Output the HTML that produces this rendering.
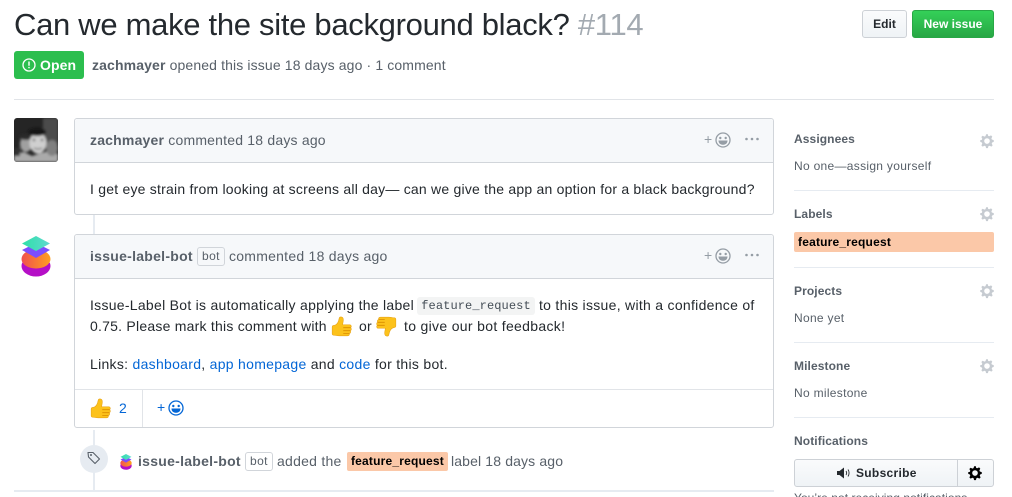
<!DOCTYPE html>
<html><head><meta charset="utf-8"><style>
html,body{margin:0;padding:0;background:#fff;width:1012px;height:497px;overflow:hidden;font-family:"Liberation Sans",sans-serif;color:#24292e}
#w{position:relative;width:1012px;height:497px;overflow:hidden}
.a{position:absolute}
.t{position:absolute;white-space:nowrap;line-height:20px;font-size:14px;letter-spacing:.2px}
.g{color:#586069}.b{font-weight:bold}
.hr{position:absolute;left:794px;width:200px;height:1px;background:#e6ebf1}
.sh{position:absolute;left:794px;font-size:12px;font-weight:bold;color:#586069;line-height:16px;letter-spacing:.1px;white-space:nowrap}
.sv{position:absolute;left:794px;font-size:12px;color:#586069;line-height:16px;letter-spacing:.3px;white-space:nowrap}
.box{position:absolute;left:74px;width:698px;border:1px solid #d1d5da;border-radius:3px;background:#fff}
.head{position:absolute;left:0;top:0;width:698px;height:43px;background:#f6f8fa;border-bottom:1px solid #d1d5da;border-radius:3px 3px 0 0}
.bot{position:absolute;border:1px solid #d1d5da;border-radius:3px;font-size:12px;line-height:17px;height:17px;padding:0 4px;color:#586069;letter-spacing:.4px}
a{color:#0366d6;text-decoration:none}
.lab{background:#fbc8a8;color:#000;font-weight:bold;font-size:12px}
svg{position:absolute;overflow:visible}
</style></head><body><div id="w">
<svg width="0" height="0"><defs>
<g id="gear"><path fill="#c6cbd1" fill-rule="evenodd" d="M14 8.800V7.200l-1.700-.5-.4-1 .8-1.600-1.100-1.100-1.600.8-1-.4L8.800 2H7.200l-.5 1.700-1 .4-1.600-.8-1.100 1.100.8 1.600-.4 1L2 7.200v1.600l1.400.5.4 1-.8 1.600 1.100 1.100 1.600-.8 1 .4.5 1.700h1.600l.5-1.700 1-.4 1.600.8 1.100-1.100-.8-1.600.4-1zM8 10.500A2.500 2.500 0 1 1 8 5.500a2.500 2.500 0 0 1 0 5z"/></g>
<g id="smile"><circle cx="8" cy="8" r="7" fill="none" stroke="currentColor" stroke-width="1.300"/><circle cx="5.300" cy="6" r="1.200" fill="currentColor"/><circle cx="10.700" cy="6" r="1.200" fill="currentColor"/><path d="M3.500 8.500h9c0 2.800-2 4.300-4.500 4.300S3.500 11.300 3.500 8.500z" fill="currentColor"/></g>
<g id="up"><path fill="#fcc21b" stroke="#e8a317" stroke-width=".5" d="M1 9.500C1 8.500 2 8 3 8 5 7.500 6.500 5 7 2 7.300.3 10 .3 10.500 2.500 10.800 4.500 10 6 10 7.500H16C17.500 7.500 17.800 9.500 16.800 10 17.800 10.800 17.600 12.300 16.500 12.600 17.200 13.400 16.800 14.800 15.800 15 16 16.300 15.200 17 14 17H7C5 17 4 16.500 2.500 16.500 1.500 16.500 1 16 1 15z"/><path stroke="#d98c00" stroke-width=".7" fill="none" d="M10.500 10H16.800M10.500 12.600H16.500M10.500 15H15.800"/></g>
<linearGradient id="tl" x1="0" y1="0" x2="1" y2="0"><stop offset="0" stop-color="#2fe0a8"/><stop offset="1" stop-color="#5fd9d0"/></linearGradient>
<linearGradient id="or" x1="0" y1="0" x2="1" y2="0"><stop offset="0" stop-color="#f0504f"/><stop offset="1" stop-color="#ffa01e"/></linearGradient>
<g id="stack"><ellipse cx="15" cy="30" rx="14.500" ry="10.500" fill="#b50fc6"/><ellipse cx="15" cy="23" rx="14.500" ry="9.500" fill="url(#or)"/><path d="M15 7 29 14 15 22 1 14z" fill="#7c4dff"/><path d="M15 0 29 7.500 15 15 1 7.500z" fill="url(#tl)"/></g>
</defs></svg>

<div class="t" style="left:14px;top:5px;font-size:31px;line-height:40px;letter-spacing:-.3px">Can we make the site background black? <span style="color:#a3aab1">#114</span></div>

<div class="a" style="left:862px;top:10px;width:43px;height:26px;border:1px solid #cdd1d6;border-radius:3px;background:linear-gradient(#fafbfc,#eff3f6);font-size:12px;font-weight:bold;line-height:26px;text-align:center">Edit</div>
<div class="a" style="left:912px;top:10px;width:80px;height:26px;border:1px solid #28a745;border-radius:3px;background:linear-gradient(#34d058,#28a745);font-size:12px;font-weight:bold;line-height:26px;text-align:center;color:#fff">New issue</div>

<div class="a" style="left:14px;top:51px;width:70px;height:28px;background:#2cbe4e;border-radius:3px"></div>
<svg style="left:22px;top:58px" width="14" height="14" viewBox="0 0 14 14"><circle cx="7" cy="7" r="6" fill="none" stroke="#fff" stroke-width="1.300"/><path d="M6.300 3.500h1.400v4.300H6.300zM6.300 8.900h1.400v1.400H6.300z" fill="#fff"/></svg>
<div class="t b" style="left:40px;top:55px;color:#fff;letter-spacing:.1px">Open</div>
<div class="t g" style="left:92px;top:55px;letter-spacing:.13px"><b>zachmayer</b> opened this issue 18 days ago · 1 comment</div>
<div class="a" style="left:14px;top:99px;width:980px;height:1px;background:#e1e4e8"></div>

<!-- avatar -->
<svg style="left:14px;top:118px" width="44" height="44" viewBox="0 0 44 44"><defs><clipPath id="c"><rect width="44" height="44" rx="3"/></clipPath><filter id="bl"><feGaussianBlur stdDeviation="1.200"/></filter></defs><g clip-path="url(#c)"><rect width="44" height="44" fill="#252525"/><g filter="url(#bl)"><rect x="29" width="15" height="26" fill="#4c4c4c"/><ellipse cx="12" cy="26" rx="6" ry="8" fill="#a0a0a0"/><ellipse cx="12" cy="19" rx="7" ry="3" fill="#2a2a2a"/><path d="M0 44V36L10 34 18 38 24 36 34 33 44 36V44z" fill="#aaa"/><ellipse cx="38" cy="30" rx="6" ry="8" fill="#808080"/><ellipse cx="24" cy="25" rx="8.500" ry="10.500" fill="#cfcfcf"/><ellipse cx="23" cy="14" rx="9" ry="4" fill="#141414"/><circle cx="20" cy="22" r="1.200" fill="#444"/><circle cx="28" cy="22" r="1.200" fill="#444"/><path d="M20 30c2 1.500 6 1.500 8 0" stroke="#666" stroke-width="1.200" fill="none"/><rect y="30" width="6" height="8" fill="#333"/></g></g></svg>

<!-- comment 1 -->
<div class="box" style="top:118px;height:95px"><div class="head"></div></div>
<div class="t g" style="left:90px;top:130px"><b>zachmayer</b> commented 18 days ago</div>
<div class="t" style="left:90px;top:179px;letter-spacing:.22px">I get eye strain from looking at screens all day— can we give the app an option for a black background?</div>
<div class="t" style="left:704px;top:129px;color:#959da5">+</div>
<svg style="left:715px;top:132px;color:#959da5" width="16" height="16" viewBox="0 0 16 16"><use href="#smile"/></svg>
<svg style="left:745px;top:137px" width="15" height="4"><circle cx="1.500" cy="2" r="1.300" fill="#959da5"/><circle cx="7" cy="2" r="1.300" fill="#959da5"/><circle cx="12.500" cy="2" r="1.300" fill="#959da5"/></svg>
<div class="a" style="left:93px;top:215px;width:2px;height:19px;background:#e6ebf1"></div>

<!-- bot avatar -->
<svg style="left:21px;top:236px" width="30" height="41" viewBox="0 0 30 41"><use href="#stack"/></svg>

<!-- comment 2 -->
<div class="box" style="top:234px;height:192px"><div class="head"></div>
<div class="a" style="left:0;top:154px;width:698px;height:1px;background:#e1e4e8"></div>
<div class="a" style="left:67px;top:155px;width:1px;height:37px;background:#e1e4e8"></div></div>
<div class="t g" style="left:90px;top:246px;letter-spacing:.27px"><b>issue-label-bot</b></div>
<div class="bot" style="left:197px;top:247px">bot</div>
<div class="t g" style="left:229px;top:246px;letter-spacing:.25px">commented 18 days ago</div>
<div class="t" style="left:704px;top:245px;color:#959da5">+</div>
<svg style="left:715px;top:248px;color:#959da5" width="16" height="16" viewBox="0 0 16 16"><use href="#smile"/></svg>
<svg style="left:745px;top:253px" width="15" height="4"><circle cx="1.500" cy="2" r="1.300" fill="#959da5"/><circle cx="7" cy="2" r="1.300" fill="#959da5"/><circle cx="12.500" cy="2" r="1.300" fill="#959da5"/></svg>

<div class="t" style="left:90px;top:295px;letter-spacing:.28px">Issue-Label Bot is automatically applying the label</div>
<div class="a" style="left:417px;top:297px;width:118px;height:18px;background:#f3f4f4;border-radius:3px;font:12px/19px 'Liberation Mono',monospace;text-align:center;color:#444d56;letter-spacing:.1px">feature_request</div>
<div class="t" style="left:539px;top:295px;letter-spacing:.29px">to this issue, with a confidence of</div>
<div class="t" style="left:90px;top:316px;letter-spacing:.23px">0.75. Please mark this comment with</div>
<svg style="left:331px;top:316px" width="21" height="21" viewBox="0 0 18 18"><use href="#up"/></svg>
<div class="t" style="left:359px;top:316px">or</div>
<svg style="left:376px;top:316px" width="21" height="21" viewBox="0 0 18 18"><g transform="translate(18,18) rotate(180)"><use href="#up"/></g></svg>
<div class="t" style="left:404px;top:316px;letter-spacing:.32px">to give our bot feedback!</div>
<div class="t" style="left:90px;top:354px;letter-spacing:.29px">Links: <a>dashboard</a>, <a>app homepage</a> and <a>code</a> for this bot.</div>

<svg style="left:90px;top:398px" width="21" height="21" viewBox="0 0 18 18"><use href="#up"/></svg>
<div class="t" style="left:119px;top:398px;color:#0366d6;font-size:14px">2</div>
<div class="t" style="left:157px;top:397px;color:#0366d6">+</div>
<svg style="left:168px;top:400px;color:#0366d6" width="16" height="16" viewBox="0 0 16 16"><use href="#smile"/></svg>

<!-- timeline -->
<div class="a" style="left:93px;top:430px;width:2px;height:60px;background:#e6ebf1"></div>
<div class="a" style="left:80px;top:445px;width:28px;height:28px;border-radius:50%;background:#e6ebf1"></div>
<svg style="left:87px;top:451px" width="14" height="14" viewBox="0 0 14 14"><path d="M1 1.500h5l6.500 6.500-4.500 4.500L1.500 6z" fill="none" stroke="#586069" stroke-width="1.100" stroke-linejoin="round"/><circle cx="4" cy="4" r="1" fill="#586069"/></svg>
<svg style="left:120px;top:454px" width="12" height="16" viewBox="0 0 30 41"><use href="#stack"/></svg>
<div class="t g" style="left:138px;top:451px;letter-spacing:.27px"><b>issue-label-bot</b></div>
<div class="bot" style="left:245px;top:452px">bot</div>
<div class="t g" style="left:277px;top:451px;letter-spacing:.25px">added the</div>
<div class="a lab" style="left:347px;top:452px;width:101px;height:19px;line-height:19px;text-align:center;border-radius:2px;letter-spacing:.2px">feature_request</div>
<div class="t g" style="left:451px;top:451px;letter-spacing:.14px">label 18 days ago</div>
<div class="a" style="left:14px;top:490px;width:760px;height:2px;background:#e6ebf1"></div>

<!-- sidebar -->
<div class="sh" style="top:131px">Assignees</div>
<svg style="left:978px;top:132px" width="18" height="18" viewBox="0 0 16 16"><use href="#gear"/></svg>
<div class="sv" style="top:158px">No one—assign yourself</div>
<div class="hr" style="top:190px"></div>
<div class="sh" style="top:206px">Labels</div>
<svg style="left:978px;top:205px" width="18" height="18" viewBox="0 0 16 16"><use href="#gear"/></svg>
<div class="a lab" style="left:794px;top:232px;width:196px;height:20px;line-height:20px;padding-left:4px;border-radius:2px;letter-spacing:.2px">feature_request</div>
<div class="hr" style="top:267px"></div>
<div class="sh" style="top:283px">Projects</div>
<svg style="left:978px;top:282px" width="18" height="18" viewBox="0 0 16 16"><use href="#gear"/></svg>
<div class="sv" style="top:310px">None yet</div>
<div class="hr" style="top:342px"></div>
<div class="sh" style="top:358px">Milestone</div>
<svg style="left:978px;top:357px" width="18" height="18" viewBox="0 0 16 16"><use href="#gear"/></svg>
<div class="sv" style="top:385px">No milestone</div>
<div class="hr" style="top:417px"></div>
<div class="sh" style="top:433px">Notifications</div>
<div class="a" style="left:794px;top:459px;width:198px;height:26px;border:1px solid #cdd1d6;border-radius:3px;background:linear-gradient(#fafbfc,#eff3f6)"></div>
<div class="a" style="left:957px;top:460px;width:1px;height:26px;background:#cdd1d6"></div>
<svg style="left:837px;top:466px" width="16" height="14" viewBox="0 0 16 14"><path d="M0 5h2.500L7 1.500v11L2.500 9H0z" fill="#24292e"/><path d="M9 5c.8 1.200.8 2.800 0 4M11 3.500c1.400 2 1.400 5 0 7" stroke="#24292e" fill="none" stroke-width=".9"/></svg>
<div class="a b" style="left:856px;top:463px;font-size:12px;line-height:20px;letter-spacing:.3px">Subscribe</div>
<svg style="left:966px;top:464px" width="18" height="18" viewBox="0 0 16 16"><g style="filter:brightness(0)"><use href="#gear"/></g></svg>
<div class="sv" style="top:490px;letter-spacing:.05px">You’re not receiving notifications</div>
</div></body></html>
